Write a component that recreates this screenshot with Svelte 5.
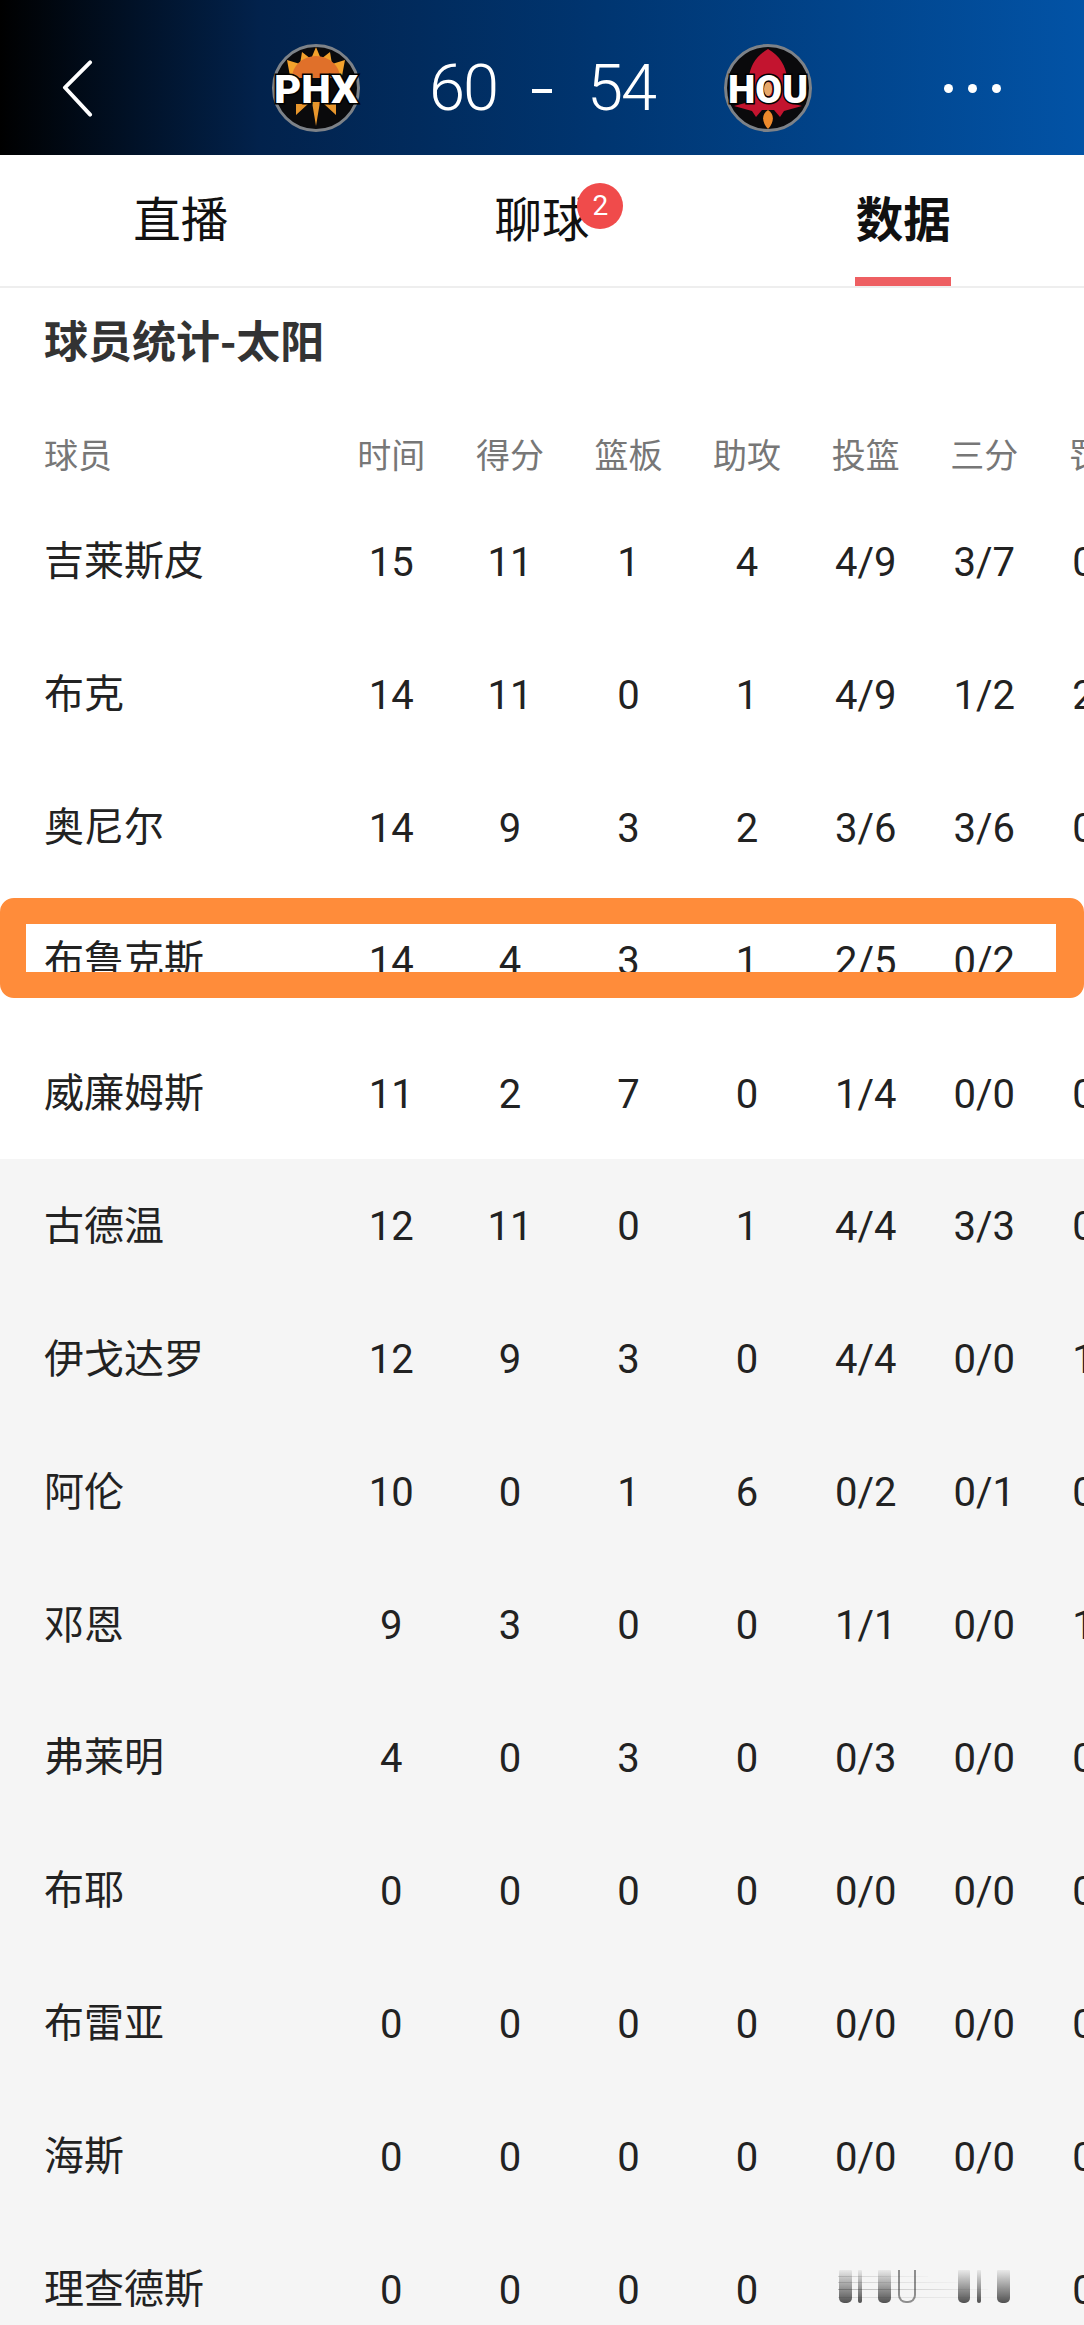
<script>
  const columns = ['时间', '得分', '篮板', '助攻', '投篮', '三分', '罚球'];
  const starters = [
    ['吉莱斯皮', '15', '11', '1', '4', '4/9', '3/7', '0/0'],
    ['布克', '14', '11', '0', '1', '4/9', '1/2', '2/2'],
    ['奥尼尔', '14', '9', '3', '2', '3/6', '3/6', '0/0'],
    ['布鲁克斯', '14', '4', '3', '1', '2/5', '0/2', '0/0'],
    ['威廉姆斯', '11', '2', '7', '0', '1/4', '0/0', '0/0']
  ];
  const bench = [
    ['古德温', '12', '11', '0', '1', '4/4', '3/3', '0/0'],
    ['伊戈达罗', '12', '9', '3', '0', '4/4', '0/0', '1/2'],
    ['阿伦', '10', '0', '1', '6', '0/2', '0/1', '0/0'],
    ['邓恩', '9', '3', '0', '0', '1/1', '0/0', '1/2'],
    ['弗莱明', '4', '0', '3', '0', '0/3', '0/0', '0/0'],
    ['布耶', '0', '0', '0', '0', '0/0', '0/0', '0/0'],
    ['布雷亚', '0', '0', '0', '0', '0/0', '0/0', '0/0'],
    ['海斯', '0', '0', '0', '0', '0/0', '0/0', '0/0'],
    ['理查德斯', '0', '0', '0', '0', '', '', '0/0']
  ];
  const bars = ['b1', 'b2', 'b3', 'b4', 'b5', 'b6', 'b7'];
</script>

<div class="page">
  <header class="top">
    <svg class="back" viewBox="0 0 32 58" aria-hidden="true">
      <path d="M29 2 L3 28 L29 56" fill="none" stroke="#fff" stroke-width="4" stroke-linecap="round" stroke-linejoin="round" />
    </svg>
    <div class="match">
      <svg class="logo" viewBox="0 0 88 88">
        <circle cx="44" cy="44" r="42.5" fill="#0a0a0c" stroke="#7d8288" stroke-width="3" />
        <path d="M44 3 L49 15 L58 8 L60 20 L73 16 L70 32 L18 32 L15 16 L28 20 L30 8 L39 15 Z" fill="#f3a12c" />
        <path d="M20 34 A24 22 0 0 1 68 34 Z" fill="#e0702a" />
        <path d="M40 58 L44 82 L48 58 Z M24 60 L36 60 L24 71 Z M64 60 L52 60 L64 71 Z" fill="#e8962c" />
        <text class="logotext" x="44" y="59" textLength="84" lengthAdjust="spacingAndGlyphs">PHX</text>
      </svg>
      <div class="score"><span>60</span><span class="dash"></span><span>54</span></div>
      <svg class="logo" viewBox="0 0 88 88">
        <circle cx="44" cy="44" r="42.5" fill="#0a0a0c" stroke="#7d8288" stroke-width="3" />
        <path d="M44 5 C56 12 62 22 63 34 L63 58 L78 62 L60 67 L56 73 L50 66 L38 66 L32 73 L28 67 L10 62 L25 58 L25 34 C26 22 32 12 44 5 Z" fill="#c3142f" />
        <path d="M44 66 C51 70 50 79 44 85 C38 79 37 70 44 66 Z" fill="#ee8a2c" />
        <text class="logotext" x="44" y="59" textLength="80" lengthAdjust="spacingAndGlyphs">HOU</text>
        <ellipse cx="44" cy="45" rx="4" ry="7" fill="#e7a869" />
      </svg>
    </div>
    <div class="dots"><i></i><i></i><i></i></div>
  </header>

  <nav class="tabs">
    <div class="tab"><span>直播</span></div>
    <div class="tab"><span class="withbadge">聊球<b class="badge">2</b></span></div>
    <div class="tab active"><span>数据</span></div>
  </nav>

  <h2 class="title">球员统计-太阳</h2>

  <div class="row head">
    <div class="name">球员</div>
    {#each columns as c}<div class="cell">{c}</div>{/each}
  </div>

  {#each starters as r}
    <div class="row">
      <div class="name">{r[0]}</div>
      {#each r.slice(1) as v}<div class="cell">{v}</div>{/each}
    </div>
  {/each}

  <div class="bench">
    {#each bench as r}
      <div class="row">
        <div class="name">{r[0]}</div>
        {#each r.slice(1) as v}<div class="cell">{v}</div>{/each}
      </div>
    {/each}
  </div>

  <div class="highlight"></div>

  <div class="mark" aria-hidden="true">
    {#each bars as b}<i class={b}></i>{/each}
  </div>
</div>

<style>
  :global(body) { margin: 0; background: #fff; }

  .page {
    position: relative;
    width: 1084px;
    height: 2325px;
    overflow: hidden;
    background: #f5f5f5;
    font-family: Roboto, "Noto Sans CJK SC", sans-serif;
    color: #222;
  }

  .top {
    height: 155px;
    display: flex;
    align-items: center;
    justify-content: space-between;
    padding: 21px 83px 0 62px;
    box-sizing: border-box;
    background: linear-gradient(90deg, #000 0%, #02224c 24%, #003570 55%, #0253a6 100%);
  }
  .back { width: 31px; height: 57px; display: block; }
  .match {
    position: absolute;
    left: 272px;
    top: 44px;
    width: 540px;
    display: flex;
    align-items: center;
    justify-content: space-between;
  }
  .logo { width: 88px; height: 88px; display: block; overflow: visible; }
  .logotext {
    font-family: Roboto, "Liberation Sans", sans-serif;
    font-weight: 900;
    font-size: 38px;
    fill: #fff;
    stroke: #000;
    stroke-width: 3px;
    paint-order: stroke;
    text-anchor: middle;
  }
  .score {
    display: flex;
    align-items: center;
    gap: 35px;
    color: #fff;
    font-weight: 300;
    font-size: 65px;
    line-height: 88px;
    letter-spacing: -2px;
  }
  .dash { width: 20px; height: 4px; background: #fff; margin-top: 6px; }
  .dots { display: flex; gap: 15px; }
  .dots i { width: 9px; height: 9px; border-radius: 50%; background: #fff; }

  .tabs {
    height: 133px;
    display: grid;
    grid-template-columns: repeat(3, 1fr);
    background: #fff;
    border-bottom: 2px solid #eee;
    box-sizing: border-box;
    font-family: "Noto Sans CJK SC", sans-serif;
    font-size: 47.5px;
    color: #111;
  }
  .tab {
    position: relative;
    display: flex;
    align-items: center;
    justify-content: center;
    padding-bottom: 7px;
  }
  .tab span { line-height: 1; }
  .withbadge { position: relative; }
  .badge {
    position: absolute;
    left: 83px;
    top: -10px;
    width: 46px;
    height: 46px;
    border-radius: 50%;
    background: #f04b4b;
    color: #fff;
    font-family: Roboto, sans-serif;
    font-weight: 400;
    font-size: 28px;
    line-height: 46px;
    text-align: center;
  }
  .active { font-weight: 700; }
  .active::after {
    content: "";
    position: absolute;
    left: 50%;
    bottom: 0;
    width: 96px;
    height: 9px;
    margin-left: -48px;
    background: #ee5f62;
  }

  .title {
    margin: 0;
    height: 130px;
    padding: 25px 0 0 44px;
    box-sizing: border-box;
    background: #fff;
    font-family: "Noto Sans CJK SC", sans-serif;
    font-weight: 700;
    font-size: 44px;
    line-height: 52px;
    color: #333;
  }

  .row {
    height: 132.9px;
    display: grid;
    grid-template-columns: 288px repeat(7, 118.6px);
    align-items: center;
    padding-left: 44px;
    width: 1300px;
    background: #fff;
    font-size: 40px;
  }
  .row.head {
    height: 77px;
    color: #777;
    font-size: 34px;
    padding-bottom: 6px;
    box-sizing: border-box;
  }
  .bench .row { background: #f5f5f5; }
  .name {
    font-family: "Noto Sans CJK SC", sans-serif;
    font-size: 40px;
    color: #222;
    padding-bottom: 6px;
  }
  .head .name { font-size: 34px; color: #777; padding-bottom: 0; }
  .cell {
    text-align: center;
    white-space: nowrap;
    padding-top: 2px;
    font-family: Roboto, "Noto Sans CJK SC", sans-serif;
  }
  .head .cell { font-family: "Noto Sans CJK SC", sans-serif; padding-top: 0; }

  .highlight {
    position: absolute;
    left: 0;
    top: 898px;
    width: 1084px;
    height: 100px;
    box-sizing: border-box;
    border: solid #ff8c3a;
    border-width: 26px 28px 26px 26px;
    border-radius: 14px;
  }

  .mark {
    position: absolute;
    left: 838px;
    top: 2270px;
    width: 172px;
    height: 33px;
    background:
      linear-gradient(90deg, rgba(0,0,0,.15), rgba(0,0,0,.02)) 0 6px / 90px 1px no-repeat,
      linear-gradient(90deg, rgba(0,0,0,.15), rgba(0,0,0,.02)) 0 12px / 120px 1px no-repeat,
      linear-gradient(90deg, rgba(0,0,0,.25), rgba(0,0,0,.02)) 0 19px / 150px 1px no-repeat,
      linear-gradient(90deg, rgba(0,0,0,.12), rgba(0,0,0,.01)) 0 27px / 170px 1px no-repeat;
  }
  .mark i {
    position: absolute;
    top: 0;
    bottom: 0;
    background: linear-gradient(180deg, rgba(40,40,40,.06), rgba(40,40,40,.8));
    border-radius: 1px 1px 5px 5px;
  }
  .b1 { left: 1px; width: 13px; }
  .b2 { left: 20px; width: 4px; }
  .b3 { left: 40px; width: 13px; }
  .b4 { left: 60px; width: 18px; background: none !important; border: solid rgba(40,40,40,.5); border-width: 0 2px 2px; box-sizing: border-box; border-radius: 0 0 8px 8px !important; }
  .b5 { left: 120px; width: 12px; }
  .b6 { left: 139px; width: 4px; }
  .b7 { left: 159px; width: 13px; }
</style>
